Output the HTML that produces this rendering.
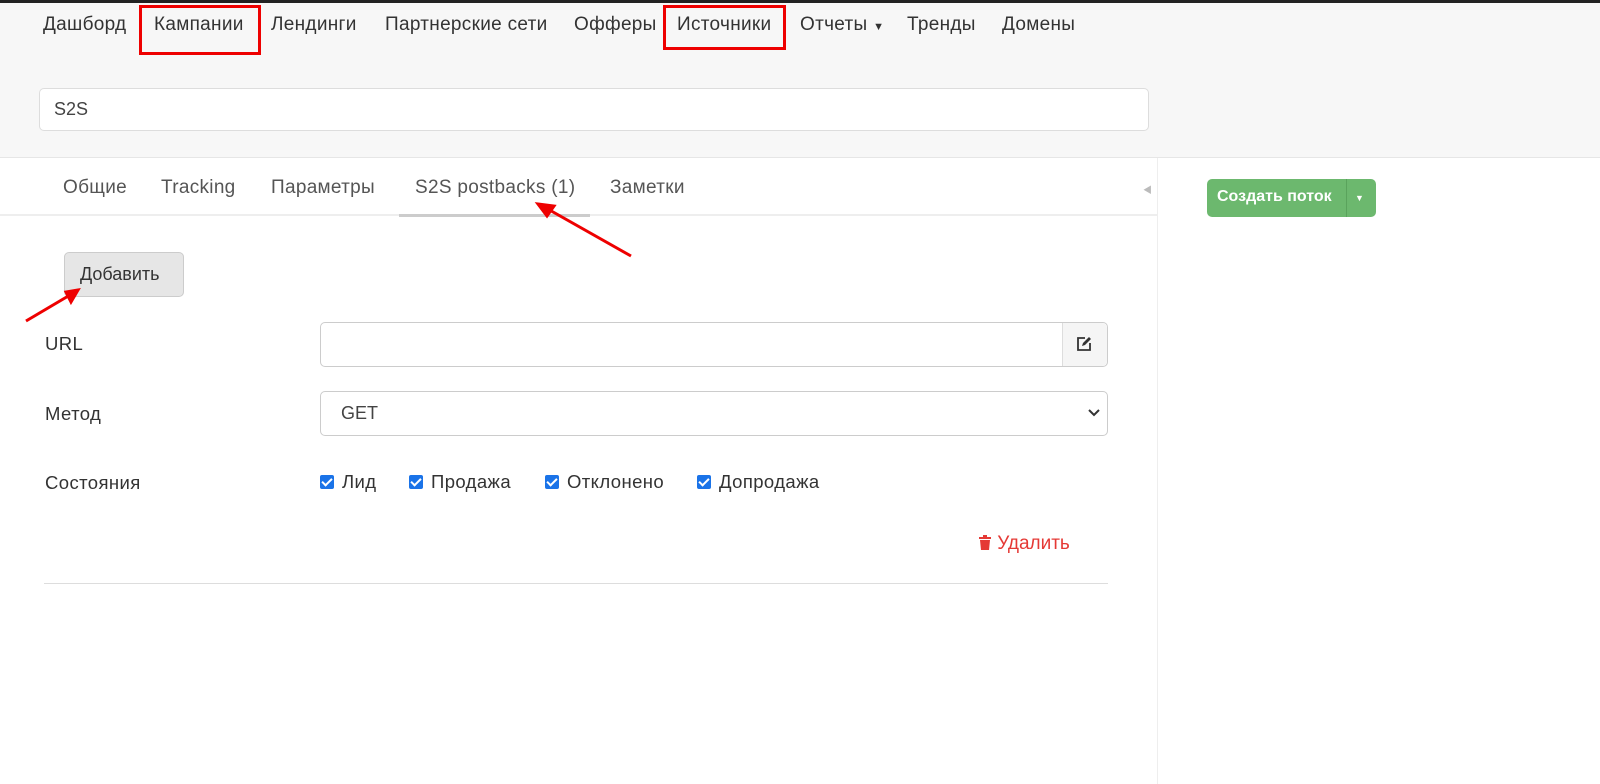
<!DOCTYPE html>
<html><head><meta charset="utf-8"><style>
*{box-sizing:border-box;margin:0;padding:0}
body{width:1600px;height:784px;background:#fff;font-family:"Liberation Sans","Noto Sans CJK SC",sans-serif;color:#333;position:relative;overflow:hidden}
.a{position:absolute;white-space:nowrap}
.nav{font-size:19px;color:#333;top:14px;letter-spacing:.3px}
.tab{font-size:19px;color:#555;top:177px;letter-spacing:.3px}
.lbl{font-size:18.5px;color:#333;letter-spacing:.4px}
.cb{display:inline-block;width:14px;height:14px;background:#1a73e8;border-radius:2px;vertical-align:-1px;margin-right:8px;position:relative}
.cb:after{content:"";position:absolute;left:4px;top:1px;width:4px;height:8px;border:solid #fff;border-width:0 2px 2px 0;transform:rotate(45deg)}
.red{position:absolute;border:3px solid #e00}
</style></head><body>
<div class="a" style="left:0;top:0;width:1600px;height:3px;background:#222"></div>
<div class="a" style="left:0;top:3px;width:1600px;height:155px;background:#f7f7f7;border-bottom:1px solid #e6e6e6"></div>
<div class="a nav" style="left:43px">Дашборд</div>
<div class="a nav" style="left:154px">Кампании</div>
<div class="a nav" style="left:271px">Лендинги</div>
<div class="a nav" style="left:385px">Партнерские сети</div>
<div class="a nav" style="left:574px">Офферы</div>
<div class="a nav" style="left:677px">Источники</div>
<div class="a nav" style="left:800px">Отчеты <span style="font-size:11px">▼</span></div>
<div class="a nav" style="left:907px">Тренды</div>
<div class="a nav" style="left:1002px">Домены</div>
<div class="red" style="left:139px;top:5px;width:122px;height:50px"></div>
<div class="red" style="left:663px;top:5px;width:123px;height:45px"></div>
<div class="a" style="left:39px;top:88px;width:1110px;height:43px;background:#fff;border:1px solid #ddd;border-radius:5px;font-size:18px;padding:10px 14px;color:#444">S2S</div>
<div class="a" style="left:1157px;top:158px;width:1px;height:626px;background:#eee"></div>
<div class="a" style="left:0;top:214px;width:1157px;height:2px;background:#eee"></div>
<div class="a tab" style="left:63px">Общие</div>
<div class="a tab" style="left:161px">Tracking</div>
<div class="a tab" style="left:271px">Параметры</div>
<div class="a tab" style="left:415px">S2S postbacks (1)</div>
<div class="a tab" style="left:610px">Заметки</div>
<div class="a" style="left:399px;top:214px;width:191px;height:3px;background:#ccc"></div>
<div class="a" style="left:1143px;top:183px;font-size:9px;color:#bbb">◀</div>
<div class="a" style="left:1207px;top:179px;width:169px;height:38px;background:#6cb86e;border-radius:5px"></div>
<div class="a" style="left:1346px;top:179px;width:1px;height:38px;background:#5aa35c"></div>
<div class="a" style="left:1217px;top:188px;font-size:16px;color:#fff;font-weight:bold">Создать поток</div>
<div class="a" style="left:1355px;top:193px;font-size:9px;color:#fff">▼</div>
<div class="a" style="left:64px;top:252px;width:120px;height:45px;background:#e6e6e6;border:1px solid #ccc;border-radius:5px;font-size:18px;padding:11px 15px;color:#333">Добавить</div>
<div class="a lbl" style="left:45px;top:333px">URL</div>
<div class="a" style="left:320px;top:322px;width:788px;height:45px;border:1px solid #ccc;border-radius:5px"></div>
<div class="a" style="left:1062px;top:323px;width:45px;height:43px;background:#f5f5f5;border-left:1px solid #ddd;border-radius:0 5px 5px 0"></div>
<svg class="a" style="left:1076px;top:336px" width="16" height="16" viewBox="0 0 16 16"><path d="M9 2H2v12h12V7" fill="none" stroke="#333" stroke-width="1.8"/><path d="M6 10l1-3 6-6 2 2-6 6z" fill="#333"/></svg>
<div class="a lbl" style="left:45px;top:403px">Метод</div>
<div class="a" style="left:320px;top:391px;width:788px;height:45px;border:1px solid #ccc;border-radius:5px;font-size:18px;padding:11px 20px;color:#444">GET</div>
<svg class="a" style="left:1088px;top:408px" width="12" height="10" viewBox="0 0 12 10"><path d="M1 2l5 5 5-5" fill="none" stroke="#333" stroke-width="2"/></svg>
<div class="a lbl" style="left:45px;top:472px">Состояния</div>
<div class="a lbl" style="left:320px;top:471px"><span class="cb"></span>Лид</div>
<div class="a lbl" style="left:409px;top:471px"><span class="cb"></span>Продажа</div>
<div class="a lbl" style="left:545px;top:471px"><span class="cb"></span>Отклонено</div>
<div class="a lbl" style="left:697px;top:471px"><span class="cb"></span>Допродажа</div>
<div class="a" style="left:978px;top:533px;font-size:19px;color:#e53935"><svg width="14" height="15" viewBox="0 0 14 15" style="vertical-align:-1px"><rect x="1" y="2" width="12" height="2" fill="#e53935"/><rect x="5" y="0" width="4" height="2" fill="#e53935"/><path d="M2 5h10l-1 10H3z" fill="#e53935"/></svg> Удалить</div>
<div class="a" style="left:44px;top:583px;width:1064px;height:1px;background:#ddd"></div>
<svg class="a" style="left:0;top:0" width="1600" height="784"><g stroke="#e00" stroke-width="3" fill="#e00"><line x1="631" y1="256" x2="546" y2="208"/><polygon points="538,204 554,206 547,216"/><line x1="26" y1="321" x2="70" y2="295"/><polygon points="78,290 66,292 71,302"/></g></svg>
</body></html>
